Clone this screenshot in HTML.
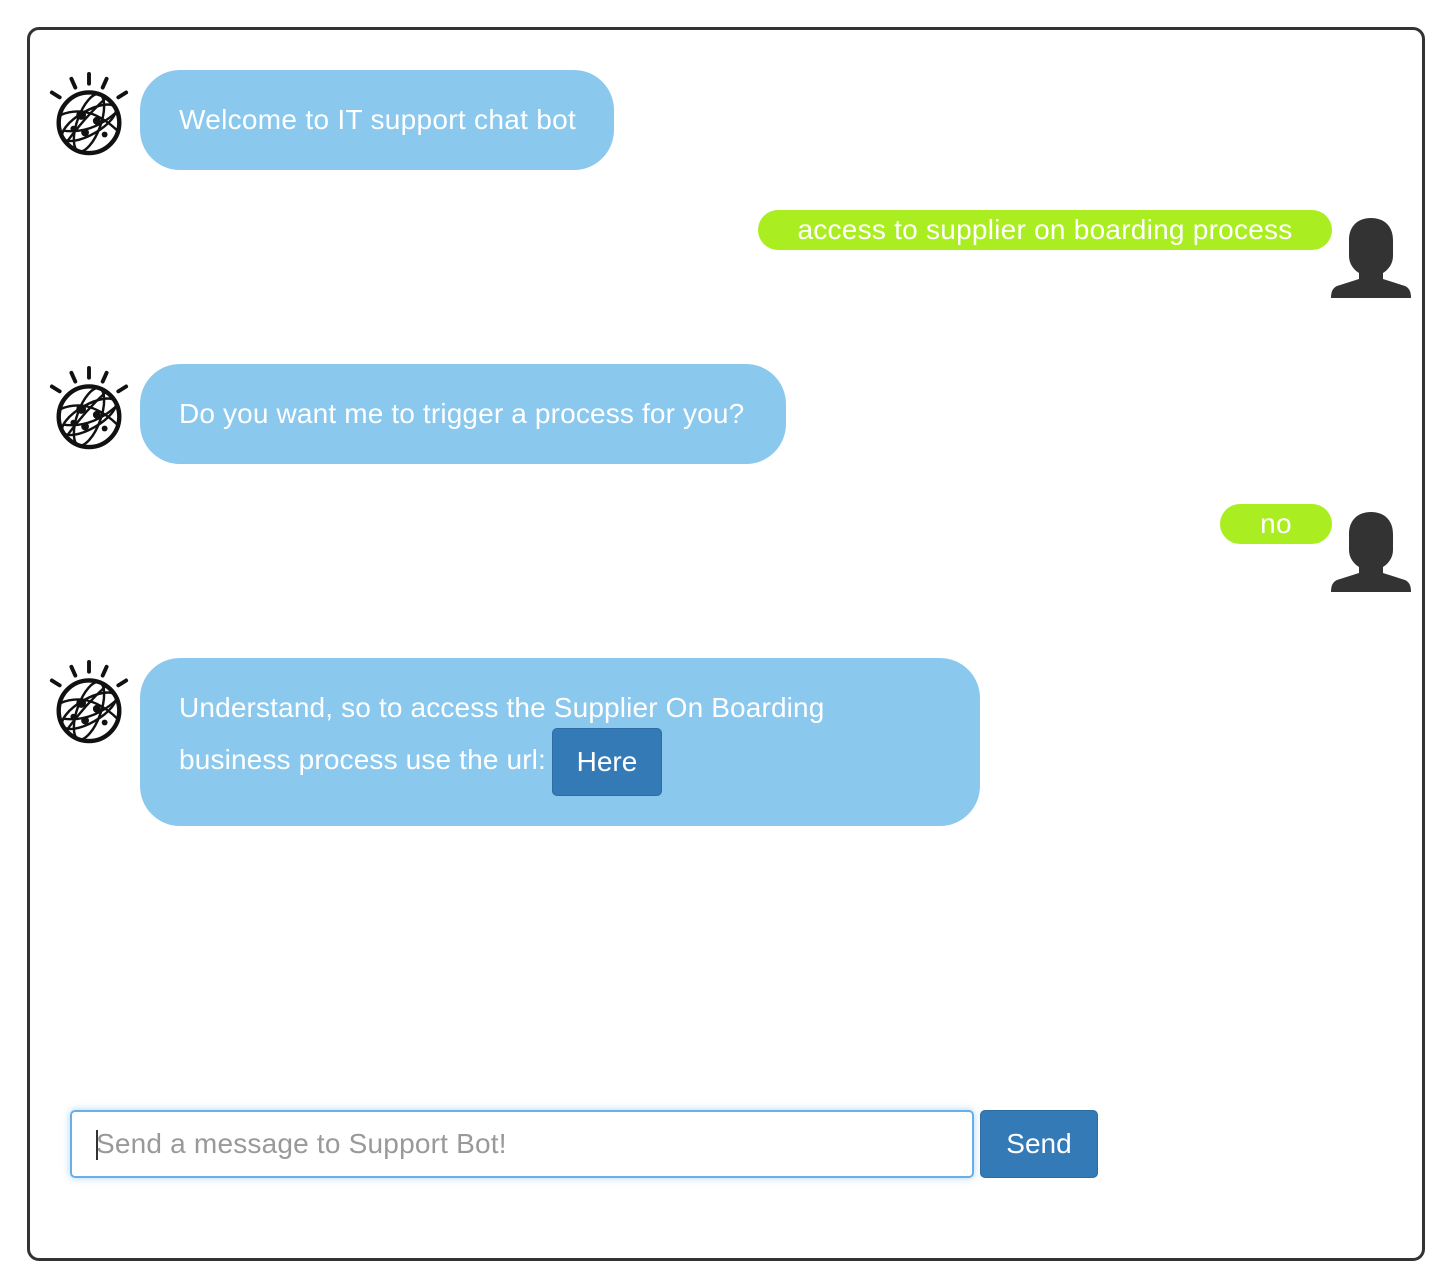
<!DOCTYPE html>
<html><head><meta charset="utf-8"><style>
body{margin:0;width:1448px;height:1270px;background:#fff;position:relative;font-family:"Liberation Sans",Arial,sans-serif;overflow:hidden}
.frame{position:absolute;left:27px;top:27px;width:1392px;height:1228px;border:3px solid #333;border-radius:12px}
.b{position:absolute;background:#8AC8EE;color:#fff;font-size:28px;border-radius:40px;box-sizing:border-box;padding-left:39px;letter-spacing:0.3px}
.u{position:absolute;background:#AAEE22;color:#fff;font-size:28px;border-radius:20px;height:40px;line-height:40px;box-sizing:border-box;text-align:center;letter-spacing:0.25px}
.bot{position:absolute;left:46px;width:86px;height:86px}
.av{position:absolute;left:1331px;width:80px;height:80px}
.btn{position:absolute;background:#337ab7;border:1px solid #2e6da4;border-radius:5px;color:#fff;font-size:28px;box-sizing:border-box;text-align:center}
</style></head><body>
<svg width="0" height="0" style="position:absolute">
<defs>
<g id="bot" fill="none" stroke="#111">
<g stroke-width="4" stroke-linecap="round">
<line x1="44" y1="4" x2="44" y2="14"/>
<line x1="26" y1="9" x2="30" y2="18"/>
<line x1="62" y1="9" x2="58" y2="18"/>
<line x1="6" y1="23" x2="14" y2="28"/>
<line x1="82" y1="23" x2="74" y2="28"/>
</g>
<circle cx="44" cy="54" r="31" stroke-width="4.5"/>
<g stroke-width="2.5">
<ellipse cx="44" cy="54" rx="31" ry="12" transform="rotate(-30 44 54)"/>
<ellipse cx="44" cy="54" rx="12" ry="31" transform="rotate(20 44 54)"/>
<path d="M15 46 Q44 34 73 62"/><path d="M21 74 Q40 48 62 28"/><path d="M17 62 Q46 66 71 44"/>
</g>
<g fill="#111" stroke="none"><circle cx="36" cy="46" r="5"/><circle cx="52" cy="52" r="4"/><circle cx="40" cy="64" r="4"/><circle cx="60" cy="66" r="3"/><circle cx="28" cy="60" r="3"/></g>
</g>
<g id="user" fill="#333"><path d="M40 0C27 0 18 8 18 22v16c0 8 5 14 10 17v6L6 68C2 70 0 73 0 80h80c0-7-2-10-6-12L52 61v-6c5-3 10-9 10-17V22C62 8 53 0 40 0z"/></g>
</defs></svg>
<div class="frame"></div>

<svg class="bot" style="top:70px" viewBox="0 0 88 88"><use href="#bot"/></svg>
<div class="b" style="left:140px;top:70px;width:474px;height:100px;line-height:100px">Welcome to IT support chat bot</div>

<div class="u" style="left:758px;top:210px;width:574px">access to supplier on boarding process</div>
<svg class="av" style="top:218px" viewBox="0 0 80 80"><use href="#user"/></svg>

<svg class="bot" style="top:364px" viewBox="0 0 88 88"><use href="#bot"/></svg>
<div class="b" style="left:140px;top:364px;width:646px;height:100px;line-height:100px;letter-spacing:0.15px">Do you want me to trigger a process for you?</div>

<div class="u" style="left:1220px;top:504px;width:112px">no</div>
<svg class="av" style="top:512px" viewBox="0 0 80 80"><use href="#user"/></svg>

<svg class="bot" style="top:658px" viewBox="0 0 88 88"><use href="#bot"/></svg>
<div class="b" style="left:140px;top:658px;width:840px;height:168px;letter-spacing:0.15px">
<div style="position:absolute;left:39px;top:30px;line-height:40px">Understand, so to access the Supplier On Boarding</div>
<div style="position:absolute;left:39px;top:82px;line-height:40px">business process use the url:</div>
</div>
<div class="btn" style="left:552px;top:728px;width:110px;height:68px;line-height:66px">Here</div>

<div style="position:absolute;left:70px;top:1110px;width:904px;height:68px;box-sizing:border-box;border:2px solid #66afe9;border-radius:5px;box-shadow:0 0 8px rgba(102,175,233,.5)">
<div style="position:absolute;left:24px;top:0;line-height:64px;font-size:28px;color:#999;letter-spacing:0.2px">Send a message to Support Bot!</div>
<div style="position:absolute;left:24px;top:18px;width:2px;height:30px;background:#333"></div>
</div>
<div class="btn" style="left:980px;top:1110px;width:118px;height:68px;line-height:66px">Send</div>
</body></html>
